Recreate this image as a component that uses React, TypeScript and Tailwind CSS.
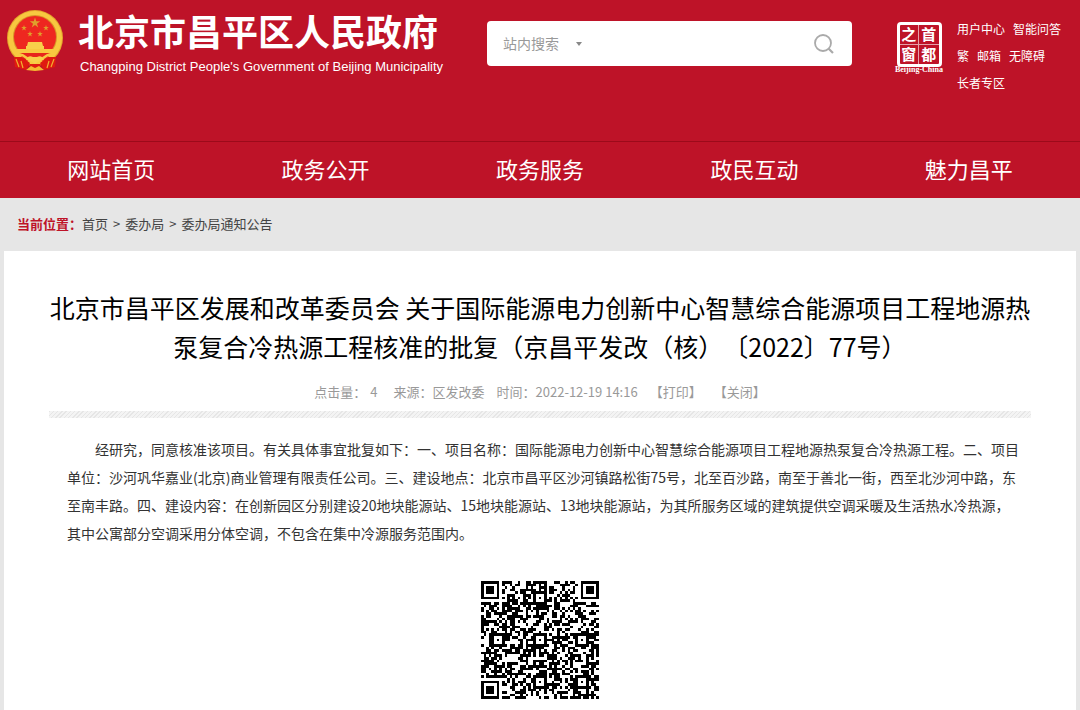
import React from 'react';

const NAV_ITEMS = ['网站首页', '政务公开', '政务服务', '政民互动', '魅力昌平'];

const TOP_LINKS = [
  ['用户中心', '智能问答'],
  ['繁', '邮箱', '无障碍'],
  ['长者专区'],
];

const CRUMBS = ['首页', '委办局', '委办局通知公告'];

const QR_SIZE = 45;

// Finder patterns in three corners, plus alignment and timing patterns
const isFixedModule = (x: number, y: number): boolean | null => {
  const corners = [[0, 0], [QR_SIZE - 7, 0], [0, QR_SIZE - 7]];
  for (const [cx, cy] of corners) {
    const d = Math.max(Math.abs(x - cx - 3), Math.abs(y - cy - 3));
    if (d <= 4) return d === 3 || d <= 1;
  }
  const centers = [[22, 6], [6, 22], [22, 22], [38, 22], [22, 38], [38, 38]];
  for (const [cx, cy] of centers) {
    const d = Math.max(Math.abs(x - cx), Math.abs(y - cy));
    if (d <= 2) return d !== 1;
  }
  if (y === 6) return x % 2 === 0;
  if (x === 6) return y % 2 === 0;
  return null;
};

const buildQrPath = () => {
  let seed = 20221219;
  let path = '';
  for (let y = 0; y < QR_SIZE; y++) {
    for (let x = 0; x < QR_SIZE; x++) {
      seed = (seed * 1103515245 + 12345) % 2147483648;
      const fixed = isFixedModule(x, y);
      const dark = fixed === null ? seed / 2147483648 < 0.52 : fixed;
      if (dark) path += `M${x} ${y}h1v1h-1z`;
    }
  }
  return path;
};

const QrCode: React.FC = () => (
  <svg viewBox="0 0 45 45" className="w-[118px] h-[118px]" shapeRendering="crispEdges" role="img" aria-label="二维码">
    <path d={buildQrPath()} fill="#000" />
  </svg>
);

const STAR = 'M0-1L.23-.31.95-.31.36.12.59.81 0 .38-.59.81-.36.12-.95-.31-.23-.31Z';

const Emblem: React.FC = () => (
  <svg viewBox="0 0 58 62" className="w-[58px] h-[62px] shrink-0" role="img" aria-label="国徽">
    <circle cx="29" cy="29" r="28" fill="#e3a52c" />
    <circle cx="29" cy="29" r="27" fill="#f8c840" />
    <circle cx="29" cy="28" r="22" fill="#d99427" />
    <circle cx="29" cy="28" r="21" fill="#ee2720" />
    <g fill="#dfa02c">
      <path d={STAR} transform="translate(29 14) scale(5.5)" />
      <path d={STAR} transform="translate(18 19) scale(3)" />
      <path d={STAR} transform="translate(40 19) scale(3)" />
      <path d={STAR} transform="translate(24 25) scale(3)" />
      <path d={STAR} transform="translate(34 25) scale(3)" />
    </g>
    <path d="M22 33h14l1 4h-16zM20 37h18v3H20z" fill="#f8cf4a" />
    <path d="M10 40h38l-2 4H12z" fill="#f8c840" />
    <path d="M13 44h32l-6 8H19z" fill="#e8251c" />
    <path d="M8 48l8 0 8 6-4 7-11-3zM50 48l-8 0-8 6 4 7 11-3z" fill="#e01a10" />
    <path d="M13 45c6 1 8 5 12 7M45 45c-6 1-8 5-12 7" fill="none" stroke="#f8c840" strokeWidth="2.5" />
    <path d="M20 51c2-5 5-4 7-3h4c2-1 5-2 7 3l-5 1-4 3-4-3z" fill="#f8cf4a" />
    <path d="M23 55h12l-3 6h-6z" fill="#e01a10" />
    <path d="M20 61l5-4 4 2 4-2 5 4-9 1z" fill="#f5b931" />
    <path d="M10 50l3 8M15 52l2 7M48 50l-3 8M43 52l-2 7" stroke="#f0b030" strokeWidth="1.2" />
  </svg>
);

const CapitalWindow: React.FC = () => (
  <a href="#" className="flex w-[52px] shrink-0 flex-col items-center">
    <span className="grid h-[45px] w-[45px] grid-cols-2 grid-rows-2 rounded-sm border-3 border-white text-center text-[15px] leading-[18px] font-bold">
      <span className="border-r border-b border-white/60">之</span>
      <span className="border-b border-white/60">首</span>
      <span className="border-r border-white/60">窗</span>
      <span>都</span>
    </span>
    <span className="font-['Liberation_Serif',serif] text-[8px] leading-[6px] font-bold whitespace-nowrap">Beijing-China</span>
  </a>
);

const SearchBox: React.FC = () => (
  <form className="flex h-[45px] w-[365px] items-center rounded bg-white pr-[18px] pl-4" onSubmit={(e) => e.preventDefault()}>
    <select aria-label="搜索范围" className="w-[60px] appearance-none bg-transparent text-[14px] text-[#999] outline-none">
      <option>站内搜索</option>
    </select>
    <svg viewBox="0 0 6 4" className="ml-[13px] h-1 w-1.5" aria-hidden="true">
      <path d="M0 0h6L3 4z" fill="#888" />
    </svg>
    <input type="text" aria-label="搜索内容" className="min-w-0 flex-1 px-3 text-[14px] text-gray-700 outline-none" />
    <button type="submit" aria-label="搜索">
      <svg viewBox="0 0 20 20" className="h-5 w-5" fill="none" stroke="#aaa">
        <circle cx="9" cy="9" r="8" strokeWidth="1.8" />
        <path d="M14.5 14.5L19 19" strokeWidth="2.2" />
      </svg>
    </button>
  </form>
);

const Header: React.FC = () => (
  <header className="bg-[#be1328] text-white">
    <div className="flex h-[141px] items-start pl-[6px]">
      <div className="flex w-[481px] shrink-0 pt-[9px]">
        <Emblem />
        <div className="pl-[14px] whitespace-nowrap">
          <h1 className="text-[36px] leading-[42px] font-bold">北京市昌平区人民政府</h1>
          <p className="pt-1 pl-[2px] font-['Liberation_Sans',sans-serif] text-[13px] leading-6">
            Changping District People's Government of Beijing Municipality
          </p>
        </div>
      </div>
      <div className="pt-[21px]">
        <SearchBox />
      </div>
      <div className="ml-auto flex w-[187px] gap-3 pt-[22px]">
        <CapitalWindow />
        <div className="-mt-[7px] text-[12px] leading-[27px] whitespace-nowrap">
          {TOP_LINKS.map((row) => (
            <div key={row[0]} className="flex gap-2">
              {row.map((label) => (
                <a key={label} href="#">{label}</a>
              ))}
            </div>
          ))}
        </div>
      </div>
    </div>
    <nav className="grid grid-cols-5 border-t border-[#9c0a1a] px-1 pb-1 text-center text-[22px] leading-[52px]">
      {NAV_ITEMS.map((item) => (
        <a key={item} href="#">{item}</a>
      ))}
    </nav>
  </header>
);

const Breadcrumb: React.FC = () => (
  <div className="flex h-[53px] items-center px-[17px] pb-[2px] text-[13px] text-[#444]">
    <span className="font-bold text-[#be1328]">当前位置：</span>
    {CRUMBS.map((crumb, index) => (
      <React.Fragment key={crumb}>
        {index > 0 && <span className="px-[5px]">&gt;</span>}
        <a href="#">{crumb}</a>
      </React.Fragment>
    ))}
  </div>
);

const Article: React.FC = () => (
  <main className="mx-1 flex-1 bg-white px-[45px] pt-[37px]">
    <h2 className="text-center text-[25px] leading-[39px] text-black">
      北京市昌平区发展和改革委员会 关于国际能源电力创新中心智慧综合能源项目工程地源热泵复合冷热源工程核准的批复（京昌平发改（核）〔2022〕77号）
    </h2>
    <div className="mt-3 flex justify-center text-[13px] leading-7 text-[#999]">
      <span>点击量：</span>
      <span className="pr-4 pl-1">4</span>
      <span className="pr-3">来源：区发改委</span>
      <span className="pr-3">时间：2022-12-19 14:16</span>
      <button type="button" className="pr-3">【打印】</button>
      <button type="button">【关闭】</button>
    </div>
    <div className="mt-[5px] h-[7px] bg-[repeating-linear-gradient(135deg,#e6e6e6_0px,#e6e6e6_1px,#f4f4f4_1px,#f4f4f4_3px)]" />
    <p className="mt-[17px] pr-[10px] pl-[18px] indent-[28px] text-[14px] leading-7 text-[#333]">
      经研究，同意核准该项目。有关具体事宜批复如下：一、项目名称：国际能源电力创新中心智慧综合能源项目工程地源热泵复合冷热源工程。二、项目单位：沙河巩华嘉业(北京)商业管理有限责任公司。三、建设地点：北京市昌平区沙河镇路松街75号，北至百沙路，南至于善北一街，西至北沙河中路，东至南丰路。四、建设内容：在创新园区分别建设20地块能源站、15地块能源站、13地块能源站，为其所服务区域的建筑提供空调采暖及生活热水冷热源，其中公寓部分空调采用分体空调，不包含在集中冷源服务范围内。
    </p>
    <div className="flex justify-center pt-[34px] pb-[11px]">
      <QrCode />
    </div>
  </main>
);

const App: React.FC = () => (
  <div lang="zh-CN" className="flex min-h-screen flex-col bg-[#e6e6e6] font-['Noto_Sans_CJK_SC',sans-serif] [text-spacing-trim:space-all]">
    <Header />
    <Breadcrumb />
    <Article />
  </div>
);

export default App;
